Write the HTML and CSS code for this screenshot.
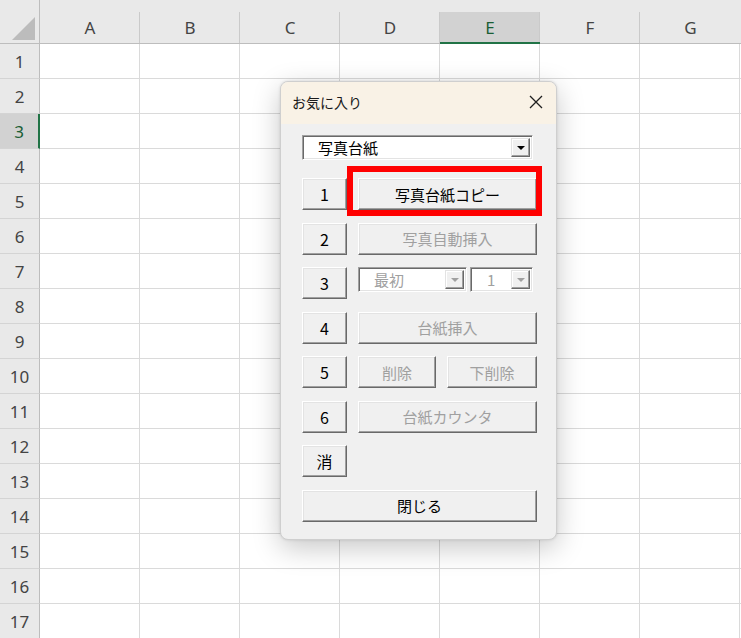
FILE: index.html
```
<!DOCTYPE html>
<html lang="ja">
<head>
    <meta charset="UTF-8">
    <meta name="viewport" content="width=device-width, initial-scale=1.0">
    <title>お気に入り</title>
    <link rel="stylesheet" href="styles.css">
</head>
<body>
    <div class="screen">
        <div class="sheet">
            <div class="corner"></div>
            <div class="col-head">A</div>
            <div class="col-head">B</div>
            <div class="col-head">C</div>
            <div class="col-head">D</div>
            <div class="col-head selected">E</div>
            <div class="col-head">F</div>
            <div class="col-head last">G</div>

            <div class="row-heads">
                <div class="row-head">1</div>
                <div class="row-head">2</div>
                <div class="row-head selected">3</div>
                <div class="row-head">4</div>
                <div class="row-head">5</div>
                <div class="row-head">6</div>
                <div class="row-head">7</div>
                <div class="row-head">8</div>
                <div class="row-head">9</div>
                <div class="row-head">10</div>
                <div class="row-head">11</div>
                <div class="row-head">12</div>
                <div class="row-head">13</div>
                <div class="row-head">14</div>
                <div class="row-head">15</div>
                <div class="row-head">16</div>
                <div class="row-head">17</div>
            </div>
            <div class="cells"></div>
        </div>

        <!-- favourites userform -->
        <div class="dialog">
            <div class="dialog-title">
                <span>お気に入り</span>
                <svg class="close" width="14" height="14" viewBox="0 0 14 14">
                    <path d="M1 1 L13 13 M13 1 L1 13" stroke="#1f1f1f" stroke-width="1.3" fill="none"/>
                </svg>
            </div>

            <div class="dialog-body">
                <div class="combo main-combo">
                    <span class="combo-text">写真台紙</span>
                    <span class="drop"><i class="arrow"></i></span>
                </div>

                <div class="row">
                    <button class="btn num">1</button>
                    <div class="marked">
                        <button class="btn action">写真台紙コピー</button>
                    </div>
                </div>

                <div class="row">
                    <button class="btn num">2</button>
                    <button class="btn action" disabled>写真自動挿入</button>
                </div>

                <div class="row">
                    <button class="btn num">3</button>
                    <div class="combo pos-combo disabled">
                        <span class="combo-text">最初</span>
                        <span class="drop"><i class="arrow"></i></span>
                    </div>
                    <div class="combo count-combo disabled">
                        <span class="combo-text">1</span>
                        <span class="drop"><i class="arrow"></i></span>
                    </div>
                </div>

                <div class="row">
                    <button class="btn num">4</button>
                    <button class="btn action" disabled>台紙挿入</button>
                </div>

                <div class="row split">
                    <button class="btn num">5</button>
                    <button class="btn del" disabled>削除</button>
                    <button class="btn del-below" disabled>下削除</button>
                </div>

                <div class="row">
                    <button class="btn num">6</button>
                    <button class="btn action" disabled>台紙カウンタ</button>
                </div>

                <div class="row">
                    <button class="btn num">消</button>
                </div>

                <div class="row">
                    <button class="btn close-btn">閉じる</button>
                </div>
            </div>
        </div>
    </div>
</body>
</html>
```

FILE: styles.css
```
* {
    box-sizing: border-box;
}

body {
    margin: 0;
    padding: 0;
    background-color: #fff;
    font-family: "Noto Sans", "Liberation Sans", sans-serif;
    overflow: hidden;
}

.screen {
    position: relative;
    width: 741px;
    height: 638px;
    overflow: hidden;
}

/* worksheet */
.sheet {
    display: grid;
    grid-template-columns: 40px repeat(6, 100px) 101px;
    grid-template-rows: 44px 595px;
    background-color: #fff;
}

.corner {
    background-color: #e9e9e9;
    border-right: 1px solid #bdbdbd;
    border-bottom: 1px solid #bdbdbd;
    position: relative;
}

.corner::after {
    content: "";
    position: absolute;
    left: 12px;
    top: 17px;
    width: 23px;
    height: 23px;
    background-color: #bcbcbc;
    clip-path: polygon(100% 0, 100% 100%, 0 100%);
}

.col-head {
    background-color: #e9e9e9;
    border-bottom: 1px solid #bdbdbd;
    border-top: 12px solid #e9e9e9;
    display: flex;
    align-items: center;
    justify-content: center;
    font-size: 17px;
    color: #444;
    position: relative;
}

.col-head::after {
    content: "";
    position: absolute;
    right: 0;
    top: 0;
    bottom: 0;
    width: 1px;
    background-color: #cacaca;
}

.col-head.last::after {
    display: none;
}

.col-head.selected {
    background-color: #d2d2d2;
    color: #1a5e35;
    border-bottom: 2px solid #217346;
}

.row-heads {
    display: flex;
    flex-direction: column;
}

.row-head {
    height: 35px;
    background-color: #e9e9e9;
    border-right: 1px solid #bdbdbd;
    border-bottom: 1px solid #d4d4d4;
    display: flex;
    align-items: center;
    justify-content: center;
    font-size: 17px;
    color: #444;
}

.row-head.selected {
    background-color: #d2d2d2;
    color: #1a5e35;
    border-right: 2px solid #217346;
}

.cells {
    grid-column: 2 / -1;
    background-image:
        repeating-linear-gradient(to right, transparent 0 99px, #dadada 99px 100px),
        repeating-linear-gradient(to bottom, transparent 0 34px, #dadada 34px 35px);
}

/* dialog window */
.dialog {
    position: absolute;
    left: 280px;
    top: 81px;
    width: 277px;
    height: 459px;
    border: 1px solid #cfcfcf;
    border-radius: 8px;
    background-color: #f0f0f0;
    box-shadow: 0 8px 28px rgba(0, 0, 0, 0.22), 0 0 3px rgba(0, 0, 0, 0.12);
    overflow: hidden;
    font-family: "Noto Sans CJK JP", "Noto Sans", sans-serif;
}

.dialog-title {
    height: 42px;
    background-color: #f9f2e6;
    display: flex;
    align-items: center;
    justify-content: space-between;
    padding: 0 13px 3px 11px;
    font-size: 14px;
    color: #1a1a1a;
}

.dialog-body {
    padding: 11px 19px 0 21px;
}

.row {
    display: flex;
    gap: 11px;
    height: 32px;
    margin-top: 12.5px;
}

.main-combo + .row {
    margin-top: 18px;
}

/* classic raised buttons */
.btn {
    margin: 0;
    padding: 0;
    background-color: #f0f0f0;
    border: 1px solid;
    border-color: #fff #696969 #696969 #fff;
    box-shadow: inset -1px -1px 0 #a0a0a0, inset 1px 1px 0 #e3e3e3;
    font-family: "Noto Sans CJK JP", sans-serif;
    font-size: 15px;
    color: #000;
    height: 32px;
    line-height: 1;
}

.btn:disabled {
    color: #a0a0a0;
}

.num {
    width: 45px;
    font-size: 16px;
}

.action {
    flex: 1;
}

.marked {
    flex: 1;
    display: flex;
    position: relative;
}

.marked::after {
    content: "";
    position: absolute;
    left: -11px;
    top: -12px;
    right: -5px;
    bottom: -6px;
    border: 6px solid #f00;
}

.del {
    width: 78px;
}

.del-below {
    flex: 1;
}

.close-btn {
    flex: 1;
}

/* combo boxes */
.combo {
    height: 25px;
    background-color: #fff;
    border: 1px solid;
    border-color: #a0a0a0 #fff #fff #a0a0a0;
    box-shadow: inset 1px 1px 0 #696969, inset -1px -1px 0 #e3e3e3;
    display: flex;
    align-items: center;
    padding: 2px;
    font-size: 15px;
    color: #000;
}

.main-combo {
    width: 231px;
}

.pos-combo {
    width: 109px;
    margin-right: -8px;
}

.count-combo {
    width: 63px;
}

.combo-text {
    flex: 1;
    padding-left: 13px;
    line-height: 1;
}

.combo.disabled {
    color: #a0a0a0;
}

.count-combo .combo-text {
    padding-left: 14px;
}

.drop {
    width: 19px;
    height: 19px;
    background-color: #f0f0f0;
    border: 1px solid;
    border-color: #e3e3e3 #696969 #696969 #e3e3e3;
    box-shadow: inset -1px -1px 0 #a0a0a0, inset 1px 1px 0 #fff;
    display: flex;
    align-items: center;
    justify-content: center;
}

.arrow {
    width: 0;
    height: 0;
    border-left: 4px solid transparent;
    border-right: 4px solid transparent;
    border-top: 4px solid #000;
    margin-top: 1px;
}

.combo.disabled .arrow {
    border-top-color: #a0a0a0;
}
```
